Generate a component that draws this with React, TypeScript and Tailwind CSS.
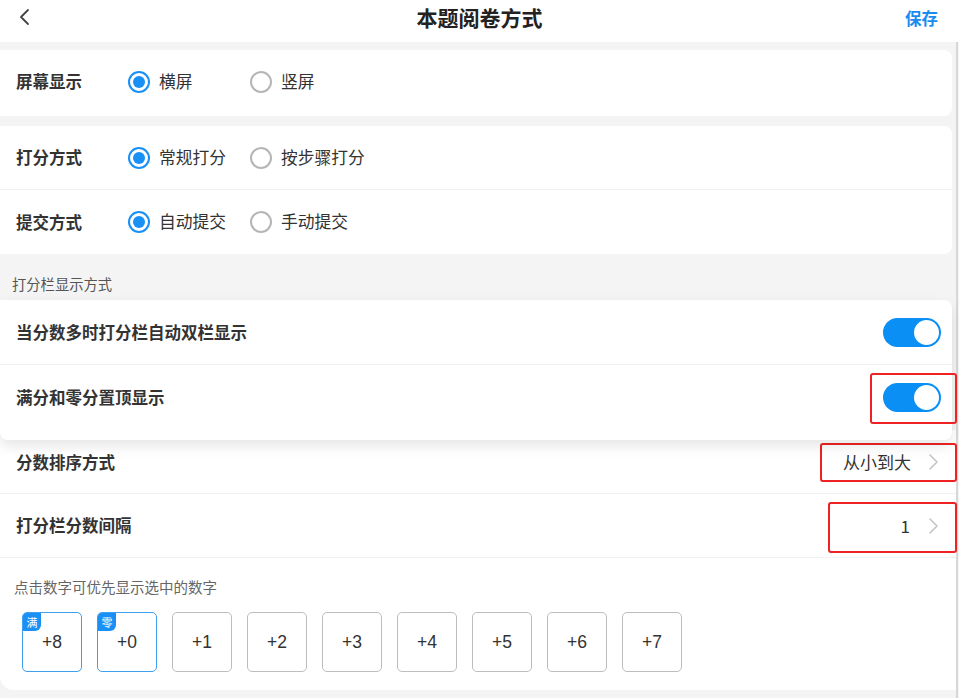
import React from "react";

const font = { fontFamily: '"Noto Sans CJK SC", "Noto Sans", sans-serif' };

function Radio({ checked, label, wide }: { checked: boolean; label: string; wide?: boolean }) {
  return (
    <div className={`flex items-center ${wide ? "w-[122px]" : ""}`}>
      {checked ? (
        <span className="w-[22px] h-[22px] rounded-full border-2 border-[#1890f5] flex items-center justify-center">
          <span className="w-[12px] h-[12px] rounded-full bg-[#1890f5]" />
        </span>
      ) : (
        <span className="w-[22px] h-[22px] rounded-full border-2 border-[#b5b5b5]" />
      )}
      <span className="ml-[9px] text-[16.75px] text-[#333]">{label}</span>
    </div>
  );
}

function Toggle() {
  return (
    <div className="w-[58px] h-[29px] rounded-full bg-[#0a8ff5] relative">
      <span className="absolute right-[2px] top-[2px] w-[25px] h-[25px] rounded-full bg-white" />
    </div>
  );
}

function Chevron() {
  return (
    <svg width="12" height="18" viewBox="0 0 12 18" fill="none">
      <path d="M2 2l7 7-7 7" stroke="#c4c4c4" strokeWidth="1.6" strokeLinecap="round" strokeLinejoin="round" />
    </svg>
  );
}

export default function App() {
  const nums = ["+1", "+2", "+3", "+4", "+5", "+6", "+7"];
  const label = "text-[16.5px] font-bold text-[#333]";
  return (
    <div className="w-[959px] h-[698px] bg-[#f4f4f4] overflow-hidden relative" style={font}>
      {/* header */}
      <div className="h-[42px] bg-white relative flex items-center justify-center">
        <svg className="absolute left-[17px] top-[8px]" width="14" height="18" viewBox="0 0 14 18" fill="none">
          <path d="M11 2L4 9l7 7" stroke="#444" strokeWidth="1.8" strokeLinecap="round" strokeLinejoin="round" />
        </svg>
        <span className="text-[21px] font-bold text-[#222] -mt-[6px]">本题阅卷方式</span>
        <span className="absolute right-[21px] top-[6px] text-[16.5px] font-bold text-[#1a8cf0]">保存</span>
      </div>

      <div className="border-r-2 border-[#d8d8d8] mr-[1px] h-full">
        <div className="h-[8px]" />
        {/* card 1 */}
        <div className="bg-white mr-[4px] rounded-r-[8px] h-[66px] flex items-center px-[16px] pb-[3px]">
          <span className={`w-[112px] ${label}`}>屏幕显示</span>
          <Radio checked label="横屏" wide />
          <Radio checked={false} label="竖屏" />
        </div>
        <div className="h-[10px]" />
        {/* card 2 */}
        <div className="bg-white mr-[4px] rounded-r-[8px]">
          <div className="h-[64px] flex items-center px-[16px] border-b border-[#f0f0f0]">
            <span className={`w-[112px] ${label}`}>打分方式</span>
            <Radio checked label="常规打分" wide />
            <Radio checked={false} label="按步骤打分" />
          </div>
          <div className="h-[64px] flex items-center px-[16px]">
            <span className={`w-[112px] ${label}`}>提交方式</span>
            <Radio checked label="自动提交" wide />
            <Radio checked={false} label="手动提交" />
          </div>
        </div>
        {/* section label */}
        <div className="h-[46px] flex items-end pb-[6px] px-[12px]">
          <span className="text-[14.3px] text-[#555]">打分栏显示方式</span>
        </div>
        {/* card 3 */}
        <div className="relative z-10 bg-white mr-[4px] rounded-r-[8px] rounded-b-[8px] shadow-[0_6px_14px_rgba(0,0,0,0.10)] pb-[10px] -mb-[10px]">
          <div className="h-[65px] flex items-center justify-between pl-[16px] pr-[11px] border-b border-[#f2f2f2]">
            <span className={label}>当分数多时打分栏自动双栏显示</span>
            <Toggle />
          </div>
          <div className="h-[65px] flex items-center justify-between pl-[16px] pr-[11px] relative">
            <span className={label}>满分和零分置顶显示</span>
            <Toggle />
            <div className="absolute right-[-5px] top-[8px] w-[87px] h-[51px] border-2 border-[#ee2222] rounded-[3px]" />
          </div>
        </div>
        {/* lower area */}
        <div className="bg-white rounded-bl-[14px] h-[260px]">
          <div className="h-[64px] flex items-center justify-between pl-[16px] pr-[16px] border-b border-[#f2f2f2] relative">
            <span className={`${label} mt-[1px]`}>分数排序方式</span>
            <div className="flex items-center mt-[1px]">
              <span className="text-[17px] text-[#333] mr-[17px]">从小到大</span>
              <Chevron />
            </div>
            <div className="absolute right-[-1px] top-[13px] w-[137px] h-[39px] border-2 border-[#ee2222] rounded-[3px]" />
          </div>
          <div className="h-[64px] flex items-center justify-between pl-[16px] pr-[16px] border-b border-[#f2f2f2] relative">
            <span className={label}>打分栏分数间隔</span>
            <div className="flex items-center">
              <span className="text-[17px] text-[#333] mr-[18px]">1</span>
              <Chevron />
            </div>
            <div className="absolute right-[-1px] top-[8px] w-[129px] h-[51px] border-2 border-[#ee2222] rounded-[3px]" />
          </div>
          <div className="pl-[14px] pt-[20px] text-[14.5px] text-[#666] leading-[18px]">点击数字可优先显示选中的数字</div>
          <div className="flex gap-[15px] pl-[22px] mt-[16px]">
            {[["满", "+8"], ["零", "+0"]].map(([b, n]) => (
              <div key={n} className="relative w-[60px] h-[60px] rounded-[5px] border-[1.5px] border-[#3ea0ee] flex items-center justify-center overflow-hidden">
                <span className="absolute left-0 top-0 w-[18px] h-[18px] bg-[#1890f5] text-white text-[11px] leading-[18px] text-center rounded-br-[6px]">{b}</span>
                <span className="text-[17.5px] text-[#333]" style={{ fontFamily: '"Liberation Sans", sans-serif' }}>{n}</span>
              </div>
            ))}
            {nums.map((n) => (
              <div key={n} className="w-[60px] h-[60px] rounded-[5px] border-[1.5px] border-[#bdbdbd] flex items-center justify-center">
                <span className="text-[17.5px] text-[#333]" style={{ fontFamily: '"Liberation Sans", sans-serif' }}>{n}</span>
              </div>
            ))}
          </div>
        </div>
      </div>
    </div>
  );
}
